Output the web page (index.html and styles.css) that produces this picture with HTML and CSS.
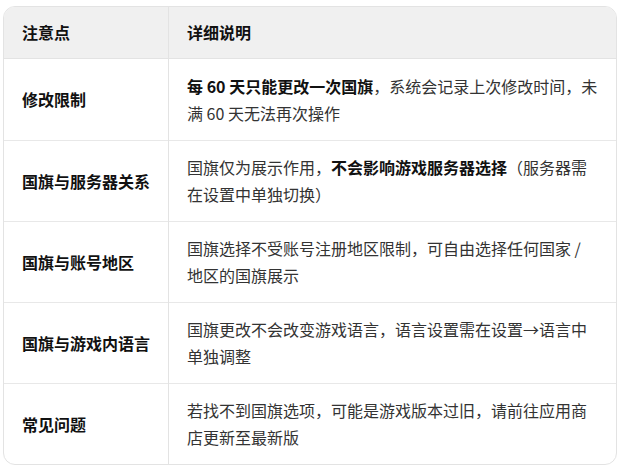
FILE: index.html
```html
<!DOCTYPE html>
<html lang="zh-CN">
<head>
<meta charset="utf-8">
<link rel="stylesheet" href="styles.css">
</head>
<body>
<div class="wrap">
<table class="tbl">
<thead>
<tr><th class="c1">注意点</th><th class="c2">详细说明</th></tr>
</thead>
<tbody>
<tr><td class="c1">修改限制</td><td class="c2"><strong>每 60 天只能更改一次国旗</strong>，系统会记录上次修改时间，未满 60 天无法再次操作</td></tr>
<tr><td class="c1">国旗与服务器关系</td><td class="c2">国旗仅为展示作用，<strong>不会影响游戏服务器选择</strong>（服务器需在设置中单独切换）</td></tr>
<tr><td class="c1">国旗与账号地区</td><td class="c2">国旗选择不受账号注册地区限制，可自由选择任何国家 / 地区的国旗展示</td></tr>
<tr><td class="c1">国旗与游戏内语言</td><td class="c2">国旗更改不会改变游戏语言，语言设置需在设置→语言中单独调整</td></tr>
<tr><td class="c1">常见问题</td><td class="c2">若找不到国旗选项，可能是游戏版本过旧，请前往应用商店更新至最新版</td></tr>
</tbody>
</table>
</div>
</body>
</html>
```
FILE: styles.css
```css
html, body {
  margin: 0;
  background: #ffffff;
}
body {
  padding: 6px 4px 0 3px;
  font-family: "Noto Sans CJK SC", "Noto Sans", sans-serif;
  font-size: 16px;
  color: #333333;
}
.wrap {
  width: 612px;
  border: 1px solid #e3e3e3;
  border-radius: 12px;
  overflow: hidden;
}
.tbl {
  width: 100%;
  border-collapse: collapse;
  table-layout: fixed;
}
.tbl th, .tbl td {
  text-align: left;
  vertical-align: middle;
  line-height: 27px;
  padding: 0 18px;
}
.tbl th {
  background: #f0f0f0;
  height: 51px;
  font-weight: 700;
  color: #111111;
  border-bottom: 1px solid #e3e3e3;
}
.tbl td {
  height: 80px;
  border-top: 1px solid #e8e8e8;
}
.tbl tbody tr:first-child td {
  border-top: none;
  height: 81px;
}
.tbl .c1 {
  width: 128px;
  border-right: 1px solid #e3e3e3;
}
.tbl td.c1 {
  font-weight: 700;
  color: #111111;
}
.tbl strong {
  font-weight: 700;
  color: #111111;
}
```
